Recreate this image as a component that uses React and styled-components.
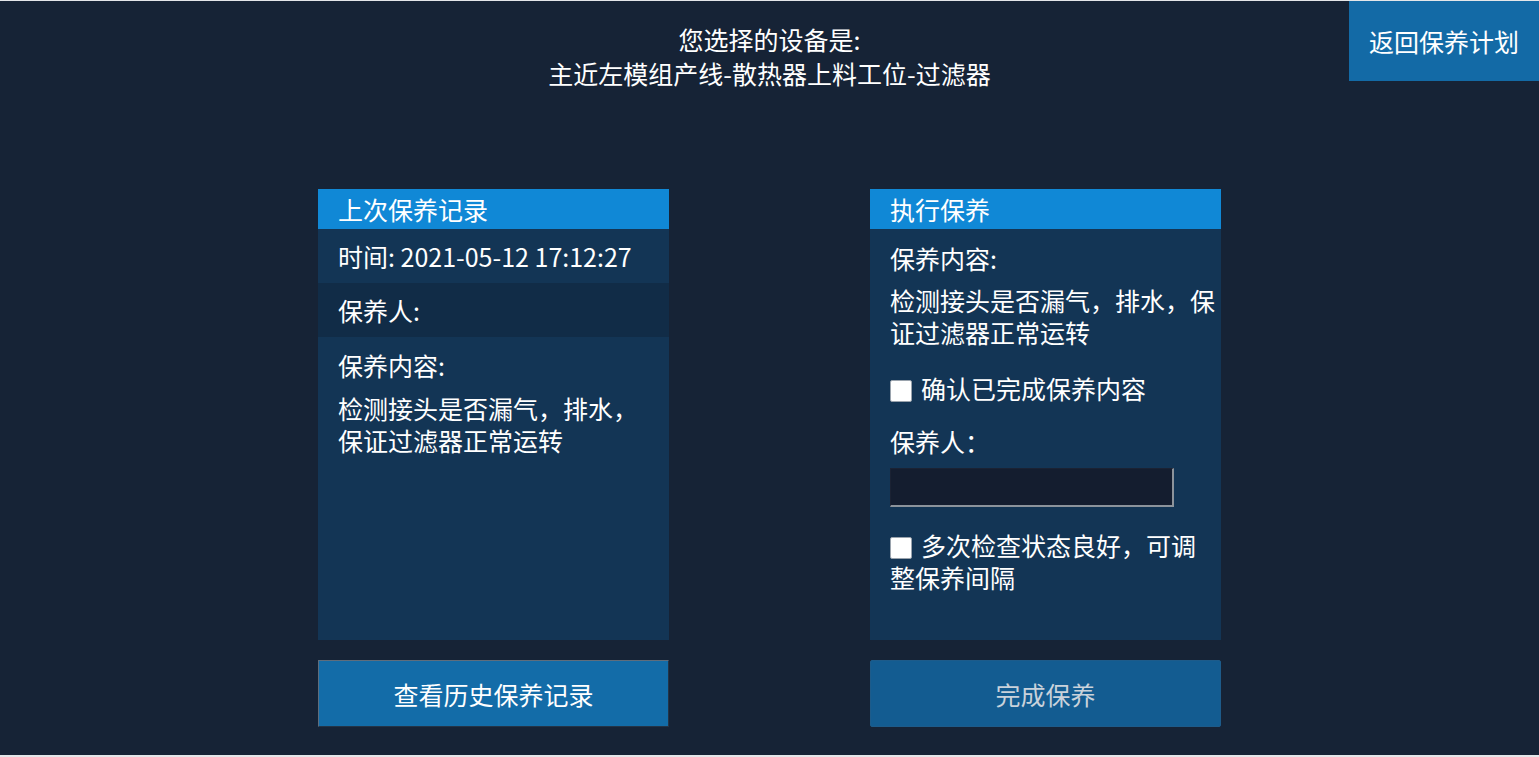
import React, { useState } from "react";
import styled, { createGlobalStyle } from "styled-components";

const GlobalStyle = createGlobalStyle`
  html, body {
    margin: 0;
    padding: 0;
    background: #e4e6e9;
  }
  body {
    font-family: "Noto Sans CJK SC", "Noto Sans", sans-serif;
    color: #ffffff;
  }
`;

const Page = styled.div`
  margin-top: 1px;
  height: 754px;
  background: #162336;
  display: flex;
  flex-direction: column;
`;

const Header = styled.header`
  display: grid;
  grid-template-columns: 1fr auto 1fr;
  align-items: start;
`;

const Title = styled.div`
  grid-column: 2;
  padding-top: 21px;
  text-align: center;
  font-size: 25px;
  line-height: 34px;
`;

const BackButton = styled.button`
  grid-column: 3;
  justify-self: end;
  width: 190px;
  height: 80px;
  border: none;
  background: #136aa6;
  color: #ffffff;
  font-family: inherit;
  font-size: 25px;
  cursor: pointer;
`;

const Columns = styled.main`
  display: flex;
  justify-content: center;
  gap: 201px;
  margin-top: 99px;
`;

const Column = styled.section`
  width: 351px;
  display: flex;
  flex-direction: column;
  gap: 20px;
`;

const Panel = styled.div`
  height: 451px;
  background: #133555;
  display: flex;
  flex-direction: column;
`;

const PanelHead = styled.div`
  height: 40px;
  background: #1088d6;
  padding-left: 20px;
  font-size: 25px;
  line-height: 40px;
`;

const InfoRow = styled.div`
  height: 54px;
  padding-left: 20px;
  font-size: 25px;
  line-height: 54px;
  background: ${(p) => (p.$dark ? "#112c47" : "#133555")};
`;

const Body = styled.div`
  padding-top: ${(p) => p.$top || 12}px;
  padding-left: 20px;
  padding-right: ${(p) => (p.$tight ? "4px" : "20px")};
  font-size: 25px;
  line-height: 32px;
  display: flex;
  flex-direction: column;
`;

const Label = styled.div`
  margin-top: ${(p) => p.$gap || 0}px;
`;

const Paragraph = styled.p`
  margin: ${(p) => p.$gap || 10}px 0 0;
`;

const CheckRow = styled.label`
  display: block;
  margin-top: 24px;
  cursor: pointer;
`;

const Box = styled.span`
  display: inline-block;
  width: 22px;
  height: 22px;
  margin-right: 9px;
  vertical-align: -3px;
  background: #ffffff;
  border: 1px solid #9aa3ad;
  border-radius: 2px;
  box-sizing: border-box;
  color: #133555;
  font-size: 16px;
  line-height: 20px;
  text-align: center;
`;

const NameInput = styled.input`
  margin-top: 11px;
  margin-bottom: -2px;
  width: 284px;
  height: 39px;
  box-sizing: border-box;
  background: #141d2f;
  border-style: solid;
  border-width: 1px 2px 2px 1px;
  border-color: #1b2233 #8c939b #8c939b #1b2233;
  color: #ffffff;
  font-family: inherit;
  font-size: 20px;
  padding: 0 8px;
  outline: none;
`;

const ActionButton = styled.button`
  height: 67px;
  width: 100%;
  font-family: inherit;
  font-size: 25px;
  cursor: pointer;
  background: ${(p) => (p.$muted ? "#135c91" : "#136ca8")};
  color: ${(p) => (p.$muted ? "#c9d2db" : "#ffffff")};
  border: 1px solid ${(p) => (p.$muted ? "#1d5b8a" : "#5f6d7c")};
  border-right-color: ${(p) => (p.$muted ? "#1d5b8a" : "#233447")};
  border-bottom-color: ${(p) => (p.$muted ? "#1d5b8a" : "#233447")};
  border-radius: ${(p) => (p.$muted ? "2px" : "0")};
`;

function Check({ checked, onToggle, children }) {
  return (
    <CheckRow onClick={onToggle}>
      <Box>{checked ? "✓" : ""}</Box>
      {children}
    </CheckRow>
  );
}

export default function App() {
  const [done, setDone] = useState(false);
  const [good, setGood] = useState(false);
  const [name, setName] = useState("");

  const content = "检测接头是否漏气，排水，保证过滤器正常运转";

  return (
    <>
      <GlobalStyle />
      <Page>
        <Header>
          <Title>
            您选择的设备是:
            <br />
            主近左模组产线-散热器上料工位-过滤器
          </Title>
          <BackButton>返回保养计划</BackButton>
        </Header>

        <Columns>
          <Column>
            <Panel>
              <PanelHead>上次保养记录</PanelHead>
              <InfoRow>时间: 2021-05-12 17:12:27</InfoRow>
              <InfoRow $dark>保养人:</InfoRow>
              <Body>
                <Label>保养内容:</Label>
                <Paragraph $gap={11}>{content}</Paragraph>
              </Body>
            </Panel>
            <ActionButton>查看历史保养记录</ActionButton>
          </Column>

          <Column>
            <Panel>
              <PanelHead>执行保养</PanelHead>
              <Body $top={13} $tight>
                <Label>保养内容:</Label>
                <Paragraph>{content}</Paragraph>
                <Check checked={done} onToggle={() => setDone(!done)}>
                  确认已完成保养内容
                </Check>
                <Label $gap={21}>保养人：</Label>
                <NameInput value={name} onChange={(e) => setName(e.target.value)} />
                <Check checked={good} onToggle={() => setGood(!good)}>
                  多次检查状态良好，可调整保养间隔
                </Check>
              </Body>
            </Panel>
            <ActionButton $muted>完成保养</ActionButton>
          </Column>
        </Columns>
      </Page>
    </>
  );
}
